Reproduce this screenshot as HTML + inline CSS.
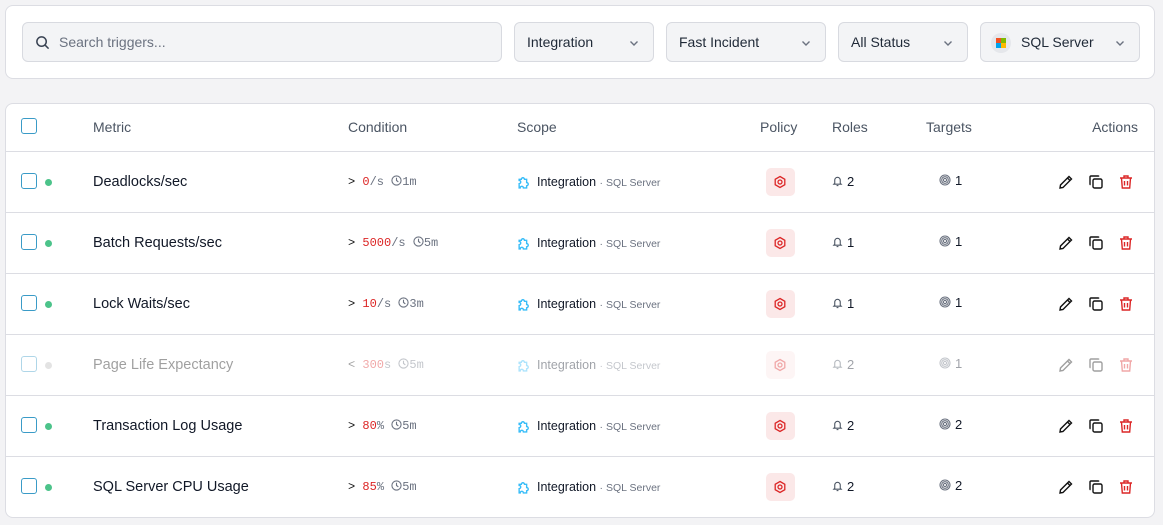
<!DOCTYPE html>
<html><head><style>
*{box-sizing:border-box;margin:0;padding:0}
body{width:1163px;height:525px;background:#f3f3f5;font-family:"Liberation Sans",sans-serif;position:relative;overflow:hidden;color:#111827}
.card{position:absolute;left:5px;width:1150px;background:#fff;border:1px solid #dcdde3;border-radius:8px}
.search{position:absolute;left:16px;top:16px;width:480px;height:40px;background:#f3f4f6;border:1px solid #d8dae0;border-radius:6px;font-size:14px;color:#6b7280;padding:11px 0 0 36px}
.dd{position:absolute;top:16px;height:40px;background:#f3f4f6;border:1px solid #d8dae0;border-radius:6px;font-size:14px;color:#1f2937;padding:11px 0 0 12px}
.dd svg.ch{position:absolute;right:14px;top:15px}
.hdr{position:absolute;top:0;left:0;right:0;height:48px;border-bottom:1px solid #dcdde3;font-size:14px;color:#4b5563}
.hdr span{position:absolute;top:15px}
.row{position:absolute;left:0;right:0;height:61px;border-bottom:1px solid #dcdde3}
.row:last-child{border-bottom:none}
.cb{position:absolute;left:15px;width:16px;height:16px;border:1.5px solid #3a9bc7;border-radius:3px}
.dot{position:absolute;left:39px;top:27px;width:7px;height:7px;border-radius:50%;background:#4cc38a}
.m{position:absolute;left:87px;top:22px;font-size:14.5px;color:#111827}
.cond{position:absolute;left:342px;top:23px;font-family:"Liberation Mono",monospace;font-size:12px;color:#6b7280}
.cond b{font-weight:normal;color:#111}
.cond i{font-style:normal;color:#dc2626}
.sc{position:absolute;left:511px;top:22px;font-size:12.5px;color:#111827}
.sc small{font-size:10.5px;color:#6b7280}
.pol{position:absolute;left:760px;top:16px;width:29px;height:28px;background:#fbe8e8;border-radius:5px}
.pol svg{position:absolute;left:7px;top:7px}
.ro{position:absolute;left:826px;top:22px;font-size:13px}
.tg{position:absolute;left:933px;top:21px;font-size:13px}
.act{position:absolute;top:22px}
.dis{opacity:.4}
</style></head><body>
<div class="card" style="top:5px;height:74px">
<div class="search"><svg style="position:absolute;left:12px;top:12px" width="15" height="15" viewBox="0 0 16 16" fill="none" stroke="#374151" stroke-width="1.6"><circle cx="7" cy="7" r="5"/><path d="M11 11l3.5 3.5"/></svg>Search triggers...</div>
<div class="dd" style="left:508px;width:140px">Integration<svg class="ch" width="10" height="10" viewBox="0 0 10 10" fill="none" stroke="#6b7280" stroke-width="1.4"><path d="M1.5 3.5L5 7l3.5-3.5"/></svg></div>
<div class="dd" style="left:660px;width:160px">Fast Incident<svg class="ch" width="10" height="10" viewBox="0 0 10 10" fill="none" stroke="#6b7280" stroke-width="1.4"><path d="M1.5 3.5L5 7l3.5-3.5"/></svg></div>
<div class="dd" style="left:832px;width:130px">All Status<svg class="ch" width="10" height="10" viewBox="0 0 10 10" fill="none" stroke="#6b7280" stroke-width="1.4"><path d="M1.5 3.5L5 7l3.5-3.5"/></svg></div>
<div class="dd" style="left:974px;width:160px;padding-left:40px"><span style="position:absolute;left:10px;top:10px;width:20px;height:20px;border-radius:50%;background:#e5e7eb"><span style="position:absolute;left:5px;top:5px;width:5px;height:5px;background:#f25022"></span><span style="position:absolute;left:10px;top:5px;width:5px;height:5px;background:#7fba00"></span><span style="position:absolute;left:5px;top:10px;width:5px;height:5px;background:#00a4ef"></span><span style="position:absolute;left:10px;top:10px;width:5px;height:5px;background:#ffb900"></span></span>SQL Server<svg class="ch" width="10" height="10" viewBox="0 0 10 10" fill="none" stroke="#6b7280" stroke-width="1.4"><path d="M1.5 3.5L5 7l3.5-3.5"/></svg></div>
</div>
<div class="card" style="top:103px;height:415px">
<div class="hdr"><div class="cb" style="top:14px"></div><span style="left:87px">Metric</span><span style="left:342px">Condition</span><span style="left:511px">Scope</span><span style="left:754px">Policy</span><span style="left:826px">Roles</span><span style="left:920px">Targets</span><span style="right:16px">Actions</span></div>
<div id="rows" style="position:absolute;top:48px;left:0;right:0"></div>
</div>
<script>
const d=[["Deadlocks/sec",">","0","/s","1m","2","1",0],["Batch Requests/sec",">","5000","/s","5m","1","1",0],["Lock Waits/sec",">","10","/s","3m","1","1",0],["Page Life Expectancy","<","300","s","5m","2","1",1],["Transaction Log Usage",">","80","%","5m","2","2",0],["SQL Server CPU Usage",">","85","%","5m","2","2",0]];
let h="";
d.forEach((r,i)=>{h+=`<div class="row" style="top:${i*61}px"><div class="${r[7]?'dis':''}">
<div class="cb" style="top:21px"></div><div class="dot" style="${r[7]?'background:#bbb':''}"></div>
<div class="m" style="${r[7]?'color:#111':''}">${r[0]}</div>
<div class="cond"><b>${r[1]}</b> <i>${r[2]}</i>${r[3]} <svg width="11" height="11" viewBox="0 0 12 12" fill="none" stroke="#6b7280" stroke-width="1.2" style="vertical-align:-1px"><circle cx="6" cy="6" r="5"/><path d="M6 3v3l2 1.5"/></svg>${r[4]}</div>
<div class="sc"><svg width="15" height="15" viewBox="0 0 14 14" fill="none" stroke="#38bdf8" stroke-width="1.3" style="vertical-align:-3px;margin-right:5px"><path d="M2 5h2a1.5 1.5 0 113 0h2v3a1.5 1.5 0 110 3v2H6a1.5 1.5 0 10-3 0H2V9a1.5 1.5 0 100-3z"/></svg>Integration <small>· SQL Server</small></div>
<div class="pol"><svg width="14" height="14" viewBox="0 0 14 14" fill="none" stroke="#dc2626" stroke-width="1.3"><path d="M7 1.5l4.8 2.75v5.5L7 12.5 2.2 9.75v-5.5z"/><circle cx="7" cy="7" r="2"/></svg></div>
<div class="ro"><svg width="11" height="12" viewBox="0 0 12 13" fill="none" stroke="#4b5563" stroke-width="1.2" style="vertical-align:-1px;margin-right:4px"><path d="M3 9V5.5a3 3 0 016 0V9l1 1H2z"/><path d="M5 11.5h2"/></svg>${r[5]}</div>
<div class="tg"><svg width="12" height="12" viewBox="0 0 12 12" fill="none" stroke="#6b7280" stroke-width="1.1" style="vertical-align:-1px;margin-right:4px"><circle cx="6" cy="6" r="5"/><circle cx="6" cy="6" r="3.3"/><circle cx="6" cy="6" r="1.6"/></svg>${r[6]}</div>
<svg class="act" style="left:1052px" width="16" height="16" viewBox="0 0 16 16" fill="none" stroke="#111" stroke-width="1.4"><path d="M11 2.5l2.5 2.5L5 13.5 2 14l.5-3z"/><path d="M9.5 4l2.5 2.5"/></svg>
<svg class="act" style="left:1082px" width="16" height="16" viewBox="0 0 16 16" fill="none" stroke="#111" stroke-width="1.4"><rect x="5" y="5" width="9" height="9" rx="1.5"/><path d="M11 2.5A1 1 0 0010 2H3a1 1 0 00-1 1v7a1 1 0 00.5.9"/></svg>
<svg class="act" style="left:1112px" width="16" height="16" viewBox="0 0 16 16" fill="none" stroke="#dc2626" stroke-width="1.4"><path d="M2 4h12M6 4V2h4v2M3.5 4l.8 10h7.4l.8-10M6.5 7v4.5M9.5 7v4.5"/></svg>
</div></div>`});
document.getElementById("rows").innerHTML=h;
</script>
</body></html>
